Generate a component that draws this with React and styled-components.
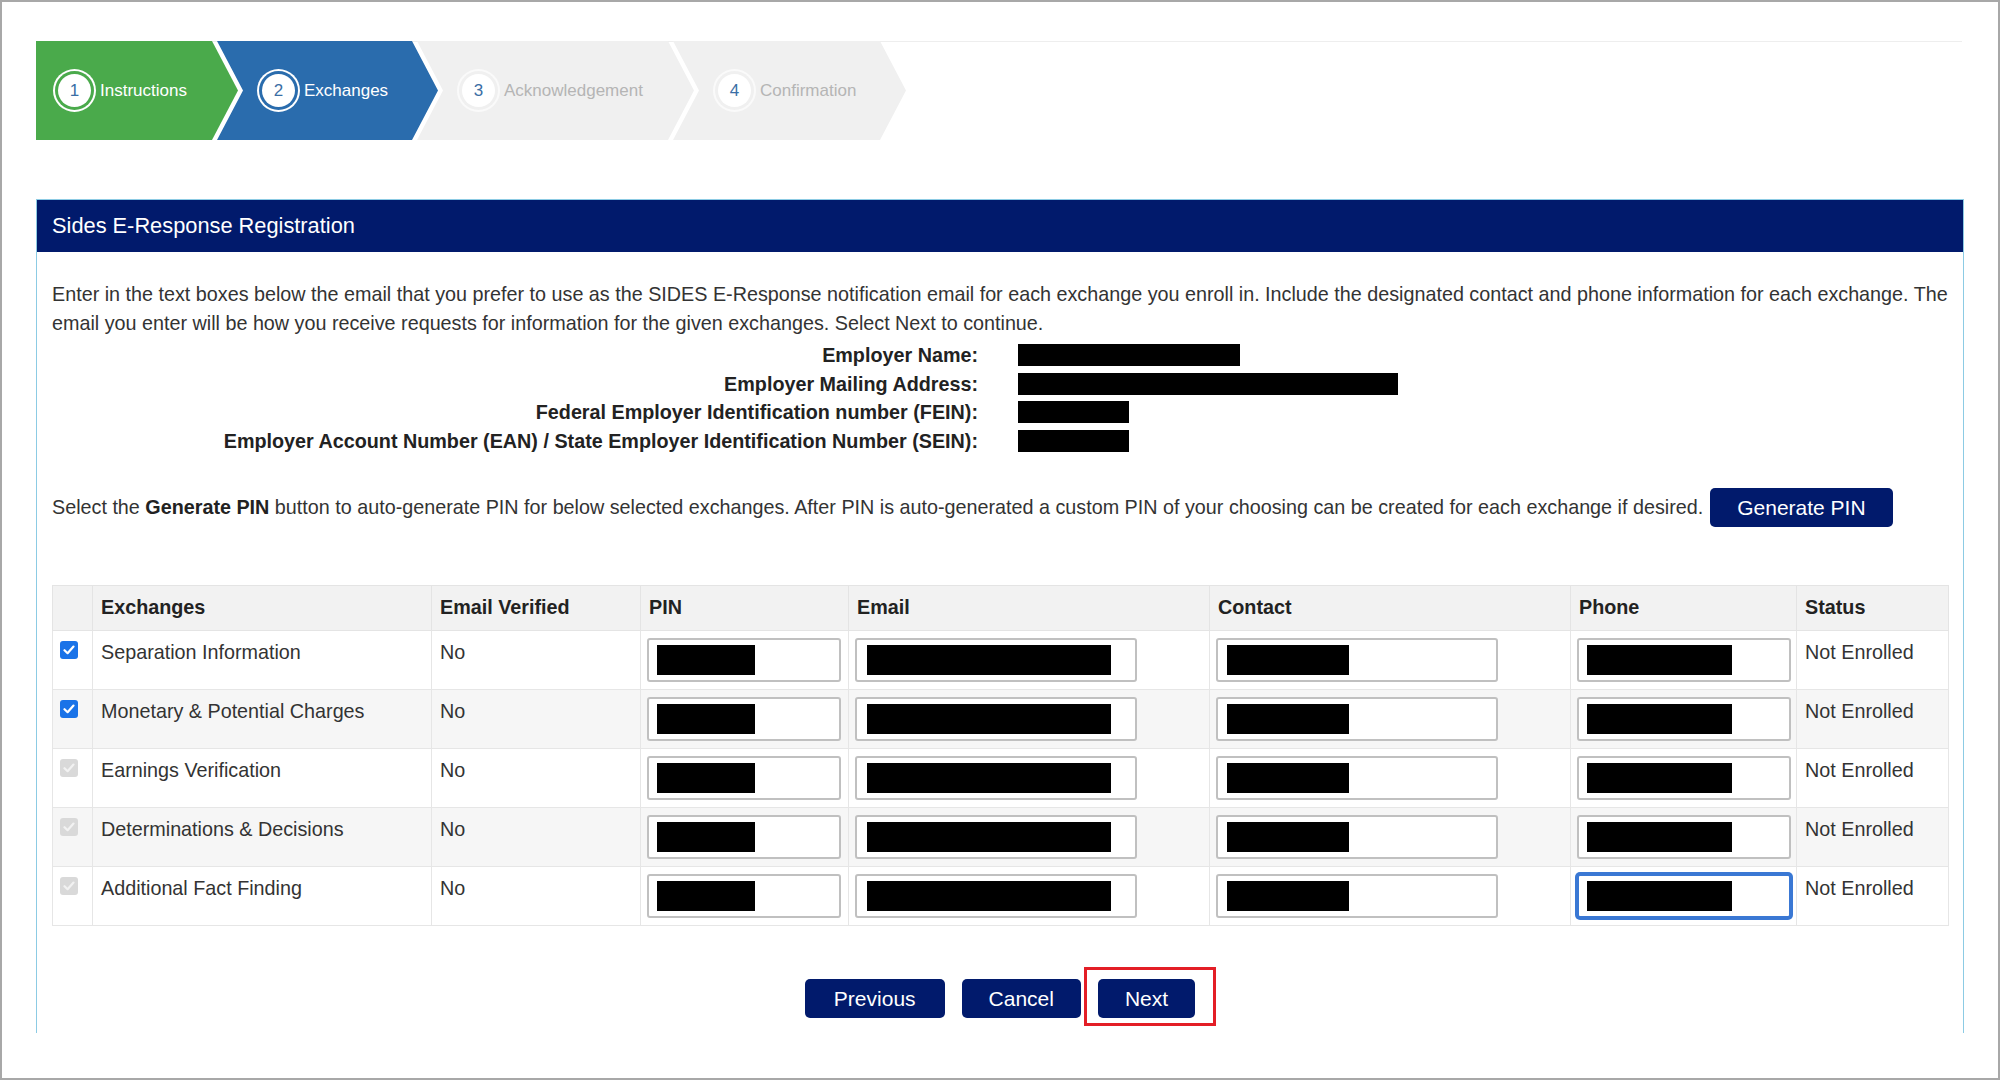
import React from 'react';
import styled, { createGlobalStyle } from 'styled-components';

const GlobalStyle = createGlobalStyle`
  html, body {
    margin: 0;
    padding: 0;
    background: #fff;
  }
  body {
    font-family: 'Liberation Sans', Arial, sans-serif;
    color: #333;
  }
  * {
    box-sizing: border-box;
  }
`;

const NAVY = '#011a6c';

const Frame = styled.div`
  width: 2000px;
  height: 1080px;
  border: 2px solid #a8a8a8;
  overflow: hidden;
  padding: 39px 0 0 34px;
`;

const Stepper = styled.div`
  display: flex;
  width: 1926px;
  height: 99px;
  background: linear-gradient(#eeeeee, #eeeeee) top left / 100% 1px no-repeat;
`;

const Step = styled.div`
  display: flex;
  align-items: center;
  flex: none;
  height: 99px;
  width: ${(p) => p.$w}px;
  margin-left: ${(p) => (p.$first ? 0 : -21)}px;
  padding-left: ${(p) => (p.$first ? 22 : 45)}px;
  background: ${(p) => p.$bg};
  clip-path: ${(p) =>
    p.$first
      ? 'polygon(0 0, calc(100% - 26px) 0, 100% 50%, calc(100% - 26px) 100%, 0 100%)'
      : 'polygon(0 0, calc(100% - 26px) 0, 100% 50%, calc(100% - 26px) 100%, 0 100%, 26px 50%)'};
`;

const StepNum = styled.span`
  width: 33px;
  height: 33px;
  flex: none;
  border-radius: 50%;
  background: #fff;
  color: #3a6ea5;
  font-size: 17px;
  display: flex;
  align-items: center;
  justify-content: center;
  box-shadow: 0 0 0 3px ${(p) => p.$bg}, 0 0 0 5px ${(p) => (p.$active ? '#ffffff' : '#fafafa')};
`;

const StepLabel = styled.span`
  margin-left: 9px;
  font-size: 17px;
  color: ${(p) => (p.$active ? '#ffffff' : '#b5b5b5')};
  white-space: nowrap;
`;

const Panel = styled.section`
  margin-top: 59px;
  width: 1928px;
  height: 834px;
  border: 1px solid #8ccbe4;
  border-bottom: none;
`;

const PanelHeader = styled.header`
  height: 52px;
  background: ${NAVY};
  color: #fff;
  font-size: 21.8px;
  display: flex;
  align-items: center;
  padding-left: 15px;
`;

const PanelBody = styled.div`
  padding: 28px 15px 0;
  font-size: 19.75px;
`;

const Intro = styled.p`
  margin: 0;
  line-height: 29px;
`;

const InfoGrid = styled.div`
  display: grid;
  grid-template-columns: 926px auto;
  column-gap: 40px;
  margin-top: 3px;
`;

const InfoLabel = styled.div`
  text-align: right;
  font-weight: bold;
  color: #222;
  line-height: 28.5px;
`;

const Redact = styled.span`
  display: block;
  width: ${(p) => p.$w}px;
  height: ${(p) => p.$h || 22}px;
  background: #000;
  align-self: center;
`;

const PinRow = styled.div`
  margin-top: 33px;
  display: flex;
  align-items: center;
  gap: 7px;
  white-space: nowrap;
`;

const Button = styled.button`
  height: 39px;
  padding: 0 ${(p) => p.$pad || 29}px;
  background: ${NAVY};
  color: #fff;
  border: none;
  border-radius: 5px;
  font-family: 'Liberation Sans', Arial, sans-serif;
  font-size: 21px;
  cursor: pointer;
`;

const Table = styled.table`
  margin-top: 58px;
  width: 1896px;
  border-collapse: collapse;
  table-layout: fixed;
  font-size: 19.75px;
`;

const Th = styled.th`
  height: 45px;
  padding: 0 8px 2px;
  text-align: left;
  background: #f2f2f2;
  border: 1px solid #e4e4e4;
  font-weight: bold;
  color: #222;
`;

const Tr = styled.tr`
  background: ${(p) => (p.$alt ? '#f6f6f6' : '#ffffff')};
`;

const Td = styled.td`
  height: 59px;
  padding: ${(p) => (p.$field ? '7px 0 0 6px' : '10px 8px 0')};
  vertical-align: top;
  border: 1px solid #e6e6e6;
  line-height: 22px;
`;

const CheckCell = styled.td`
  padding: 10px 0 0 7px;
  vertical-align: top;
  border: 1px solid #e6e6e6;
`;

const Check = styled.span`
  display: flex;
  align-items: center;
  justify-content: center;
  width: 18px;
  height: 18px;
  border-radius: 3px;
  background: ${(p) => (p.$disabled ? '#d9d9d9' : '#1a73e8')};
`;

const Field = styled.div`
  width: ${(p) => p.$w}px;
  height: 44px;
  background: #fff;
  border: 2px solid ${(p) => (p.$focus ? '#3a78d4' : '#c0c0c0')};
  border-radius: 3px;
  box-shadow: ${(p) => (p.$focus ? '0 0 0 2px #3a78d4' : 'none')};
  display: flex;
  align-items: center;
  padding-left: ${(p) => p.$pl || 8}px;
`;

const Actions = styled.div`
  margin-top: 53px;
  display: flex;
  justify-content: center;
  gap: 17px;
`;

const Highlight = styled.span`
  position: relative;
  display: inline-flex;
  &::after {
    content: '';
    position: absolute;
    left: -14px;
    right: -21px;
    top: -12px;
    bottom: -8px;
    border: 3px solid #e31e26;
    pointer-events: none;
  }
`;

const steps = [
  { n: 1, label: 'Instructions', bg: '#4aaa4b', w: 202, active: true },
  { n: 2, label: 'Exchanges', bg: '#2a6cad', w: 221, active: true },
  { n: 3, label: 'Acknowledgement', bg: '#f0f0f0', w: 277 },
  { n: 4, label: 'Confirmation', bg: '#f0f0f0', w: 233 },
];

const employer = [
  { label: 'Employer Name:', w: 222 },
  { label: 'Employer Mailing Address:', w: 380 },
  { label: 'Federal Employer Identification number (FEIN):', w: 111 },
  { label: 'Employer Account Number (EAN) / State Employer Identification Number (SEIN):', w: 111 },
];

const exchanges = [
  { name: 'Separation Information', enabled: true },
  { name: 'Monetary & Potential Charges', enabled: true },
  { name: 'Earnings Verification' },
  { name: 'Determinations & Decisions' },
  { name: 'Additional Fact Finding', focus: true },
];

const cols = [40, 339, 209, 208, 361, 361, 226, 152];

function CheckMark({ color }) {
  return (
    <svg width="12" height="10" viewBox="0 0 12 10">
      <path d="M1.5 5.2 L4.6 8.2 L10.5 1.6" fill="none" stroke={color} strokeWidth="2.2" strokeLinecap="round" strokeLinejoin="round" />
    </svg>
  );
}

export default function App() {
  return (
    <>
      <GlobalStyle />
      <Frame>
        <Stepper>
          {steps.map((s, i) => (
            <Step key={s.n} $first={i === 0} $w={s.w} $bg={s.bg}>
              <StepNum $bg={s.bg} $active={s.active}>{s.n}</StepNum>
              <StepLabel $active={s.active}>{s.label}</StepLabel>
            </Step>
          ))}
        </Stepper>

        <Panel>
          <PanelHeader>Sides E-Response Registration</PanelHeader>
          <PanelBody>
            <Intro>
              Enter in the text boxes below the email that you prefer to use as the SIDES E-Response notification email for each exchange you enroll in. Include the designated contact and phone information for each exchange. The email you enter will be how you receive requests for information for the given exchanges. Select Next to continue.
            </Intro>

            <InfoGrid>
              {employer.map((e) => (
                <React.Fragment key={e.label}>
                  <InfoLabel>{e.label}</InfoLabel>
                  <Redact $w={e.w} />
                </React.Fragment>
              ))}
            </InfoGrid>

            <PinRow>
              <span>
                Select the <b style={{ color: '#222' }}>Generate PIN</b> button to auto-generate PIN for below selected exchanges. After PIN is auto-generated a custom PIN of your choosing can be created for each exchange if desired.
              </span>
              <Button $pad={27}>Generate PIN</Button>
            </PinRow>

            <Table>
              <colgroup>
                {cols.map((w, i) => (
                  <col key={i} style={{ width: w }} />
                ))}
              </colgroup>
              <thead>
                <tr>
                  <Th />
                  <Th>Exchanges</Th>
                  <Th>Email Verified</Th>
                  <Th>PIN</Th>
                  <Th>Email</Th>
                  <Th>Contact</Th>
                  <Th>Phone</Th>
                  <Th>Status</Th>
                </tr>
              </thead>
              <tbody>
                {exchanges.map((x, i) => (
                  <Tr key={x.name} $alt={i % 2 === 1}>
                    <CheckCell>
                      <Check $disabled={!x.enabled}>
                        <CheckMark color={x.enabled ? '#fff' : '#f2f2f2'} />
                      </Check>
                    </CheckCell>
                    <Td>{x.name}</Td>
                    <Td>No</Td>
                    <Td $field>
                      <Field $w={194}>
                        <Redact $w={98} $h={30} />
                      </Field>
                    </Td>
                    <Td $field>
                      <Field $w={282} $pl={10}>
                        <Redact $w={244} $h={30} />
                      </Field>
                    </Td>
                    <Td $field>
                      <Field $w={282} $pl={9}>
                        <Redact $w={122} $h={30} />
                      </Field>
                    </Td>
                    <Td $field>
                      <Field $w={214} $focus={x.focus}>
                        <Redact $w={145} $h={30} />
                      </Field>
                    </Td>
                    <Td>Not Enrolled</Td>
                  </Tr>
                ))}
              </tbody>
            </Table>

            <Actions>
              <Button $pad={29}>Previous</Button>
              <Button $pad={27}>Cancel</Button>
              <Highlight>
                <Button $pad={27}>Next</Button>
              </Highlight>
            </Actions>
          </PanelBody>
        </Panel>
      </Frame>
    </>
  );
}
